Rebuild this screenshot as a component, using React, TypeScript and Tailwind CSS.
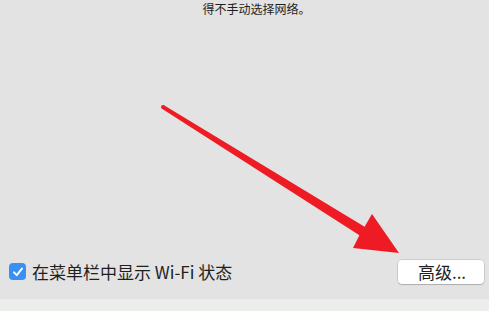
import React from "react";

export default function App() {
  return (
    <div
      className="relative flex h-[311px] w-[489px] flex-col overflow-hidden bg-[#e3e3e3] text-[#1f1f1f]"
      style={{ fontFamily: '"Noto Sans CJK SC", "Noto Sans", sans-serif' }}
    >
      <div className="flex h-[16px] items-start justify-center pl-[24px] pt-[1px] text-[12px] leading-[16px]">
        得不手动选择网络。
      </div>
      <div className="flex-1" />
      <div className="flex h-[25px] items-center justify-between pl-[9px] pr-[5px]">
        <div className="flex items-center gap-[6px]">
          <div className="flex h-[17px] w-[17px] items-center justify-center rounded-[4px] bg-[#3a8ff3]">
            <svg width="12" height="12" viewBox="0 0 12 12">
              <path d="M2 6.3 L4.8 9.2 L10 2.6" fill="none" stroke="white" strokeWidth="1.9" strokeLinecap="round" strokeLinejoin="round" />
            </svg>
          </div>
          <span className="text-[17px] leading-[20px]">在菜单栏中显示 Wi-Fi 状态</span>
        </div>
        <button className="flex h-[24px] w-[86px] items-center justify-center rounded-[4px] bg-white pl-[2px] text-[17px] leading-[20px] text-[#1f1f1f] shadow-[0_0_0_0.5px_rgba(0,0,0,0.2),0_1px_1px_rgba(0,0,0,0.15)]">
          高级...
        </button>
      </div>
      <div className="h-[15px]" />
      <div className="h-[12px] bg-[#eceeec]" />
      <svg className="pointer-events-none absolute left-0 top-0" width="489" height="311" viewBox="0 0 489 311">
        <polygon
          points="164,105.3 364.6,226.8 372,214 399,253 353,248 359.4,235.3 162,108.7"
          fill="#ee1b24"
        />
        <circle cx="163" cy="107" r="2" fill="#ee1b24" />
      </svg>
    </div>
  );
}
